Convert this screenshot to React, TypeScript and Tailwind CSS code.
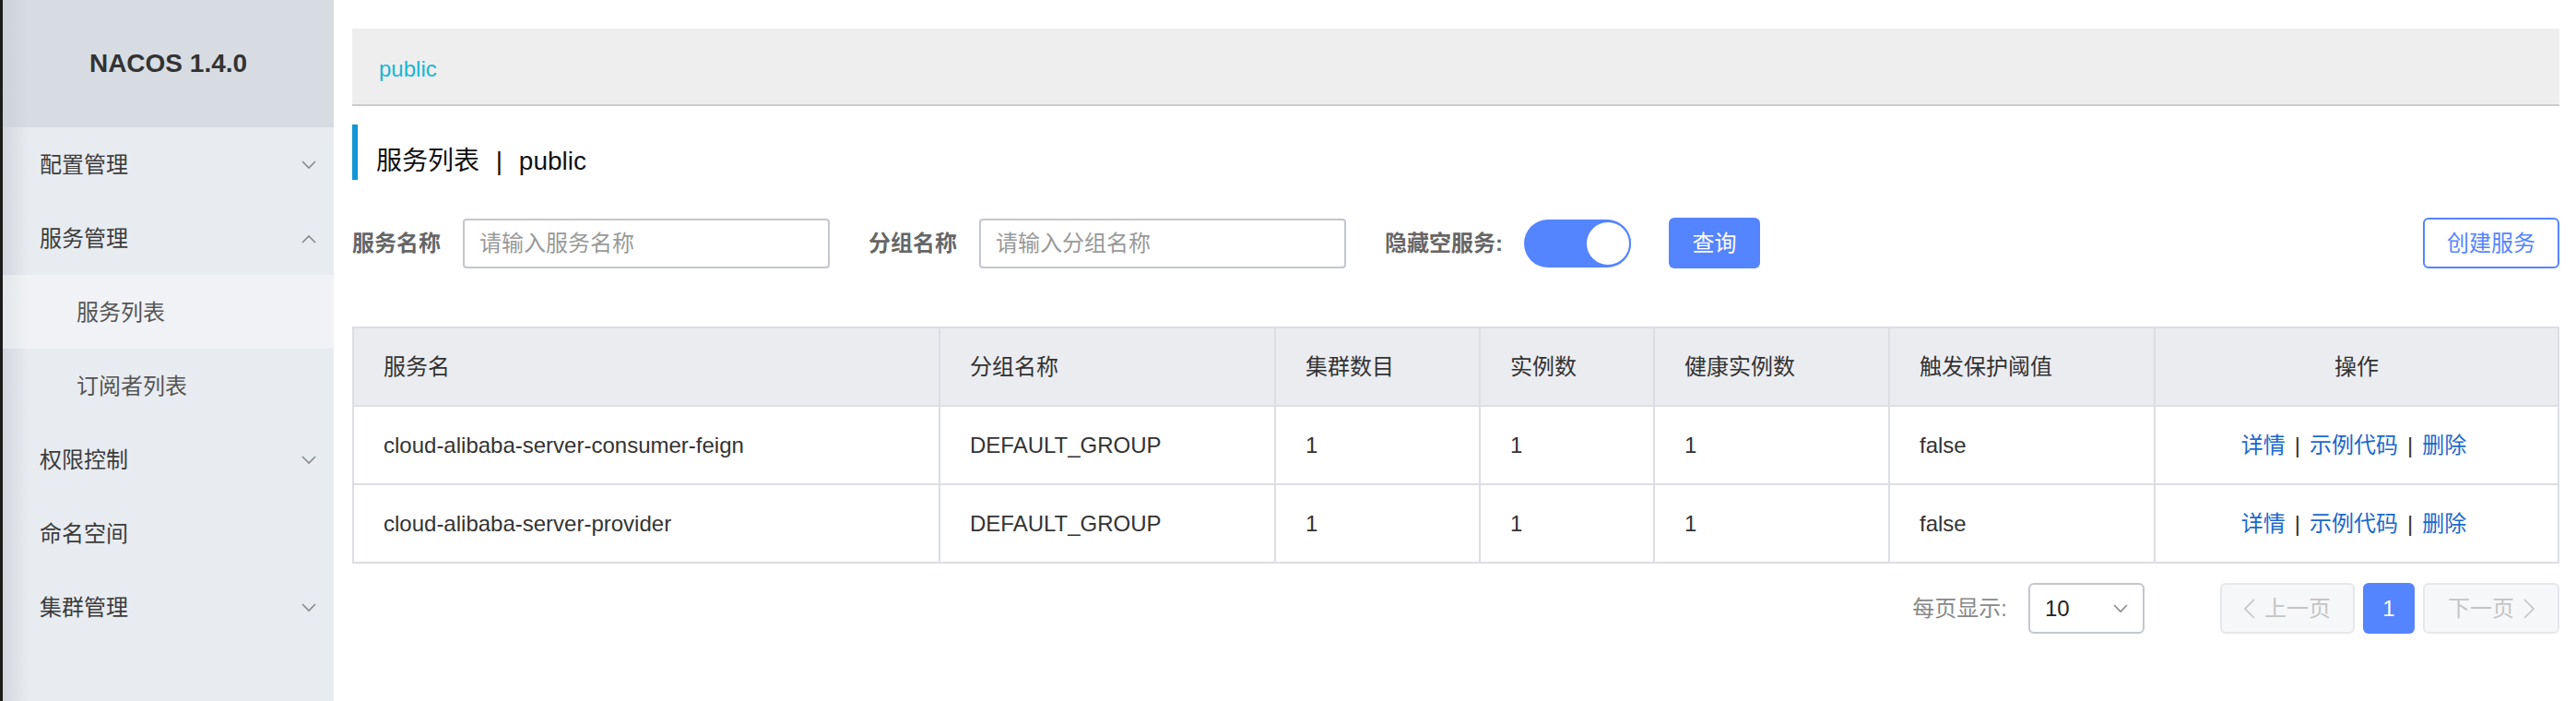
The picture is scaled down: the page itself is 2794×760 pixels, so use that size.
import { ReactNode } from 'react'

const font = { fontFamily: '"Liberation Sans", "Noto Sans CJK SC", sans-serif' }

const Chevron = ({ up = false }: { up?: boolean }) => (
  <svg width="16" height="10" viewBox="0 0 16 10" fill="none" className="text-[#8a8a8a]">
    <polyline
      points={up ? '1,9 8,2 15,9' : '1,1 8,8 15,1'}
      stroke="currentColor"
      strokeWidth="1.6"
    />
  </svg>
)

const menu = [
  { label: '配置管理', arrow: 'down' },
  { label: '服务管理', arrow: 'up' },
  { label: '服务列表', sub: true, active: true },
  { label: '订阅者列表', sub: true },
  { label: '权限控制', arrow: 'down' },
  { label: '命名空间' },
  { label: '集群管理', arrow: 'down' },
]

const rows = [
  { name: 'cloud-alibaba-server-consumer-feign', group: 'DEFAULT_GROUP' },
  { name: 'cloud-alibaba-server-provider', group: 'DEFAULT_GROUP' },
]

const Sidebar = () => (
  <aside className="w-[362px] shrink-0 border-l-[3px] border-[#1c1c1c] bg-[linear-gradient(to_right,#d3d7dd,#e8ebf0_28px)]">
    <div className="h-[138px] flex items-center justify-center text-[28px] font-bold text-[#333] bg-[linear-gradient(to_right,#cdd1d8,#d7dce3_28px)]">
      NACOS 1.4.0
    </div>
    {menu.map((m) => (
      <div
        key={m.label}
        className={`h-20 flex items-center justify-between pr-[19px] pt-[2px] text-[24px] ${
          m.sub ? 'pl-[80px] text-[#555]' : 'pl-[40px] text-[#3c3c3c]'
        } ${m.active ? 'bg-[linear-gradient(to_right,#e3e6ea,#f0f2f5_28px)]' : ''}`}
      >
        <span>{m.label}</span>
        {m.arrow && <Chevron up={m.arrow === 'up'} />}
      </div>
    ))}
  </aside>
)

const Label = ({ children, className = '' }: { children: ReactNode; className?: string }) => (
  <span className={`text-[24px] font-bold text-[#666] whitespace-nowrap ${className}`}>{children}</span>
)

const Input = ({ placeholder }: { placeholder: string }) => (
  <div className="ml-6 w-[398px] h-[54px] border-2 border-[#c4c6cf] rounded-[4px] flex items-center pl-[16px] text-[24px] text-[#999]">
    {placeholder}
  </div>
)

const Th = ({ children, center = false }: { children: ReactNode; center?: boolean }) => (
  <th
    className={`h-[85px] border-2 border-[#dcdee3] bg-[#ebecf0] font-normal text-[24px] text-[#333] ${
      center ? 'text-center' : 'text-left pl-[32px]'
    }`}
  >
    {children}
  </th>
)

const Td = ({ children, center = false }: { children: ReactNode; center?: boolean }) => (
  <td
    className={`h-[85px] border-2 border-[#dcdee3] text-[24px] text-[#333] ${
      center ? 'text-center' : 'text-left pl-[32px]'
    }`}
  >
    {children}
  </td>
)

export default function App() {
  return (
    <div className="w-[2794px] h-[760px] flex bg-white overflow-hidden" style={font}>
      <Sidebar />
      <main className="flex-1 px-5 pt-[31px]">
        <div className="h-[84px] bg-[#eeeeee] border-b-2 border-[#cccccc] flex items-center pl-[29px] pt-[6px] text-[24px] text-[#1cb5d4]">
          public
        </div>

        <div className="mt-5 h-[60px] border-l-[6px] border-[#1296d4] pl-[20px] pt-[22px] text-[28px] leading-[36px] text-[#111]">
          服务列表 <span className="mx-[10px]">|</span> public
        </div>

        <div className="mt-[41px] flex items-center">
          <Label>服务名称</Label>
          <Input placeholder="请输入服务名称" />
          <Label className="ml-[42px]">分组名称</Label>
          <Input placeholder="请输入分组名称" />
          <Label className="ml-[42px]">隐藏空服务:</Label>
          <div className="ml-[23px] w-[116px] h-[52px] rounded-full bg-[#5584ff] flex items-center justify-end">
            <div className="w-[50px] h-[50px] rounded-full bg-white border-2 border-[#5584ff]" />
          </div>
          <button className="ml-[41px] w-[99px] h-[55px] rounded-[6px] bg-[#5584ff] text-white text-[24px]">
            查询
          </button>
          <button className="ml-auto w-[148px] h-[55px] rounded-[6px] border-2 border-[#5584ff] bg-white text-[#5584ff] text-[24px]">
            创建服务
          </button>
        </div>

        <table className="mt-[63px] w-full table-fixed border-collapse">
          <colgroup>
            <col className="w-[636px]" />
            <col className="w-[364px]" />
            <col className="w-[222px]" />
            <col className="w-[189px]" />
            <col className="w-[255px]" />
            <col className="w-[288px]" />
            <col className="w-[438px]" />
          </colgroup>
          <thead>
            <tr>
              <Th>服务名</Th>
              <Th>分组名称</Th>
              <Th>集群数目</Th>
              <Th>实例数</Th>
              <Th>健康实例数</Th>
              <Th>触发保护阈值</Th>
              <Th center>操作</Th>
            </tr>
          </thead>
          <tbody>
            {rows.map((r) => (
              <tr key={r.name}>
                <Td>{r.name}</Td>
                <Td>{r.group}</Td>
                <Td>1</Td>
                <Td>1</Td>
                <Td>1</Td>
                <Td>false</Td>
                <Td center>
                  <span className="pr-[6px]">
                    <span className="text-[#1a68cc]">详情</span>
                    <span className="mx-[10px] text-[#333]">|</span>
                    <span className="text-[#1a68cc]">示例代码</span>
                    <span className="mx-[10px] text-[#333]">|</span>
                    <span className="text-[#1a68cc]">删除</span>
                  </span>
                </Td>
              </tr>
            ))}
          </tbody>
        </table>

        <div className="mt-[21px] flex items-center justify-end">
          <span className="text-[24px] text-[#888]">每页显示:</span>
          <div className="ml-[23px] w-[126px] h-[55px] border-2 border-[#c4c6cf] rounded-[6px] flex items-center justify-between pl-[16px] pr-[16px] text-[24px] text-[#222]">
            <span>10</span>
            <Chevron />
          </div>
          <div className="ml-[82px] w-[146px] h-[55px] border-2 border-[#e6e7eb] bg-[#f6f7f9] rounded-[6px] flex items-center justify-center gap-[10px] text-[24px] text-[#c4c4c4]">
            <svg width="12" height="22" viewBox="0 0 12 22" fill="none">
              <polyline points="11,1 1,11 11,21" stroke="currentColor" strokeWidth="1.6" />
            </svg>
            上一页
          </div>
          <div className="ml-[9px] w-[56px] h-[55px] rounded-[6px] bg-[#5584ff] text-white text-[24px] flex items-center justify-center">
            1
          </div>
          <div className="ml-[9px] w-[148px] h-[55px] border-2 border-[#e6e7eb] bg-[#f6f7f9] rounded-[6px] flex items-center justify-center gap-[10px] text-[24px] text-[#c4c4c4]">
            下一页
            <svg width="12" height="22" viewBox="0 0 12 22" fill="none">
              <polyline points="1,1 11,11 1,21" stroke="currentColor" strokeWidth="1.6" />
            </svg>
          </div>
        </div>
      </main>
    </div>
  )
}
